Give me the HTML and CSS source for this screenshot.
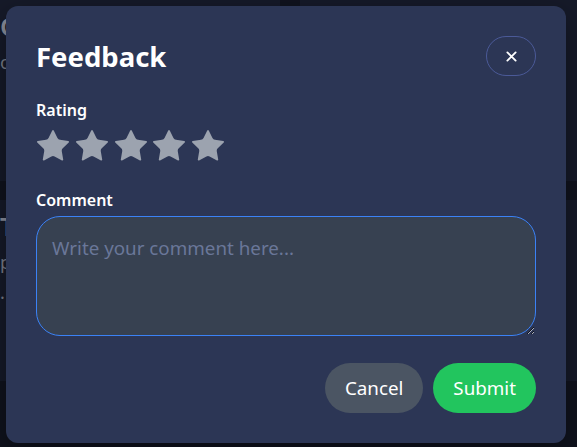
FILE: index.html
```html
<!DOCTYPE html>
<html lang="en">
<head>
<meta charset="utf-8">
<title>Feedback</title>
<link rel="stylesheet" href="styles.css">
</head>
<body>
<div class="page">
  <div class="card"><h3 class="card-title">Co</h3><p class="card-text">op</p></div>
  <div class="card"></div>
  <div class="card"><h3 class="card-title">Ta</h3><p class="card-text">pb</p><p class="card-text">.</p></div>
  <div class="card"></div>
</div>

<div class="modal" role="dialog" aria-labelledby="fb-title">
  <div class="modal-header">
    <h2 id="fb-title" class="modal-title">Feedback</h2>
    <button class="close-btn" aria-label="Close">
      <svg viewBox="0 0 12 12" width="11" height="11"><path d="M1.5 1.5l9 9M10.5 1.5l-9 9" stroke="#fff" stroke-width="2" stroke-linecap="round"/></svg>
    </button>
  </div>

  <div class="field-label">Rating</div>
  <div class="stars">
    <svg class="star" viewBox="2 2 20 20"><path d="M11.525 2.295a.53.53 0 0 1 .95 0l2.31 4.679a2.123 2.123 0 0 0 1.595 1.16l5.166.756a.53.53 0 0 1 .294.904l-3.736 3.638a2.123 2.123 0 0 0-.611 1.878l.882 5.14a.53.53 0 0 1-.771.56l-4.618-2.428a2.122 2.122 0 0 0-1.973 0L6.396 21.01a.53.53 0 0 1-.77-.56l.881-5.139a2.122 2.122 0 0 0-.611-1.879L2.16 9.795a.53.53 0 0 1 .294-.906l5.165-.755a2.122 2.122 0 0 0 1.597-1.160z"/></svg>
    <svg class="star" viewBox="2 2 20 20"><path d="M11.525 2.295a.53.53 0 0 1 .95 0l2.31 4.679a2.123 2.123 0 0 0 1.595 1.16l5.166.756a.53.53 0 0 1 .294.904l-3.736 3.638a2.123 2.123 0 0 0-.611 1.878l.882 5.14a.53.53 0 0 1-.771.56l-4.618-2.428a2.122 2.122 0 0 0-1.973 0L6.396 21.01a.53.53 0 0 1-.77-.56l.881-5.139a2.122 2.122 0 0 0-.611-1.879L2.16 9.795a.53.53 0 0 1 .294-.906l5.165-.755a2.122 2.122 0 0 0 1.597-1.160z"/></svg>
    <svg class="star" viewBox="2 2 20 20"><path d="M11.525 2.295a.53.53 0 0 1 .95 0l2.31 4.679a2.123 2.123 0 0 0 1.595 1.16l5.166.756a.53.53 0 0 1 .294.904l-3.736 3.638a2.123 2.123 0 0 0-.611 1.878l.882 5.14a.53.53 0 0 1-.771.56l-4.618-2.428a2.122 2.122 0 0 0-1.973 0L6.396 21.01a.53.53 0 0 1-.77-.56l.881-5.139a2.122 2.122 0 0 0-.611-1.879L2.16 9.795a.53.53 0 0 1 .294-.906l5.165-.755a2.122 2.122 0 0 0 1.597-1.160z"/></svg>
    <svg class="star" viewBox="2 2 20 20"><path d="M11.525 2.295a.53.53 0 0 1 .95 0l2.31 4.679a2.123 2.123 0 0 0 1.595 1.16l5.166.756a.53.53 0 0 1 .294.904l-3.736 3.638a2.123 2.123 0 0 0-.611 1.878l.882 5.14a.53.53 0 0 1-.771.56l-4.618-2.428a2.122 2.122 0 0 0-1.973 0L6.396 21.01a.53.53 0 0 1-.77-.56l.881-5.139a2.122 2.122 0 0 0-.611-1.879L2.16 9.795a.53.53 0 0 1 .294-.906l5.165-.755a2.122 2.122 0 0 0 1.597-1.160z"/></svg>
    <svg class="star" viewBox="2 2 20 20"><path d="M11.525 2.295a.53.53 0 0 1 .95 0l2.31 4.679a2.123 2.123 0 0 0 1.595 1.16l5.166.756a.53.53 0 0 1 .294.904l-3.736 3.638a2.123 2.123 0 0 0-.611 1.878l.882 5.14a.53.53 0 0 1-.771.56l-4.618-2.428a2.122 2.122 0 0 0-1.973 0L6.396 21.01a.53.53 0 0 1-.77-.56l.881-5.139a2.122 2.122 0 0 0-.611-1.879L2.16 9.795a.53.53 0 0 1 .294-.906l5.165-.755a2.122 2.122 0 0 0 1.597-1.160z"/></svg>
  </div>

  <label class="field-label comment-label" for="comment">Comment</label>
  <textarea id="comment" class="comment" placeholder="Write your comment here..."></textarea>

  <div class="actions">
    <button class="btn btn-cancel">Cancel</button>
    <button class="btn btn-submit">Submit</button>
  </div>
</div>
</body>
</html>
```

FILE: styles.css
```css
* { box-sizing: border-box; }

html, body {
  margin: 0;
  padding: 0;
  height: 100%;
  overflow: hidden;
}

body {
  background: #10131e;
  font-family: "Noto Sans", "Open Sans", sans-serif;
  color: #fff;
}

.page {
  display: grid;
  grid-template-columns: 300px 300px;
  grid-auto-rows: 181px;
  gap: 19px 20px;
  margin-left: -20px;
  height: 447px;
  overflow: hidden;
}

.card {
  background: #161a29;
  padding: 0 20px;
  overflow: hidden;
}

.card-title {
  margin: 8px 0 6px;
  font-size: 26px;
  font-weight: 600;
  color: #8b8f9c;
}

.card-text {
  margin: 0 0 6px;
  font-size: 18px;
  color: #7a7e8a;
}

.modal {
  position: absolute;
  left: 6px;
  top: 6px;
  width: 560px;
  height: 437px;
  background: #2c3655;
  border-radius: 12px;
  padding: 30px;
  display: flex;
  flex-direction: column;
  box-shadow: 0 10px 30px rgba(0, 0, 0, 0.4);
}

.modal-header {
  display: flex;
  align-items: center;
  justify-content: space-between;
  height: 40px;
  margin-bottom: 22px;
}

.modal-title {
  margin: 0;
  font-size: 27.5px;
  font-weight: 700;
  line-height: 1;
  padding-top: 2px;
}

.close-btn {
  width: 50px;
  height: 40px;
  border-radius: 20px;
  border: 1px solid #4b5a98;
  background: transparent;
  display: flex;
  align-items: center;
  justify-content: center;
  padding: 0;
  cursor: pointer;
}

.field-label {
  display: block;
  font-size: 16px;
  font-weight: 600;
  line-height: 24px;
}

.stars {
  display: flex;
  gap: 6.75px;
  margin-top: 8px;
  padding-left: 1px;
}

.star {
  width: 32px;
  height: 32px;
  fill: #9ca3af;
}

.comment-label {
  margin-top: 26px;
  margin-bottom: 4px;
}

.comment {
  width: 500px;
  height: 120px;
  background: #374151;
  border: 1px solid #3b82f6;
  border-radius: 24px;
  padding: 18px 15px 15px;
  font-family: inherit;
  font-size: 18.8px;
  color: #fff;
  outline: none;
}

.comment::placeholder {
  color: #6a7799;
}

.actions {
  display: flex;
  justify-content: flex-end;
  gap: 10px;
  margin-top: auto;
}

.btn {
  height: 50px;
  border-radius: 25px;
  border: none;
  padding: 0 20px;
  font-family: inherit;
  font-size: 18.8px;
  color: #fff;
  cursor: pointer;
}

.btn-cancel { background: #4b5563; }
.btn-submit { background: #22c55e; }
```
